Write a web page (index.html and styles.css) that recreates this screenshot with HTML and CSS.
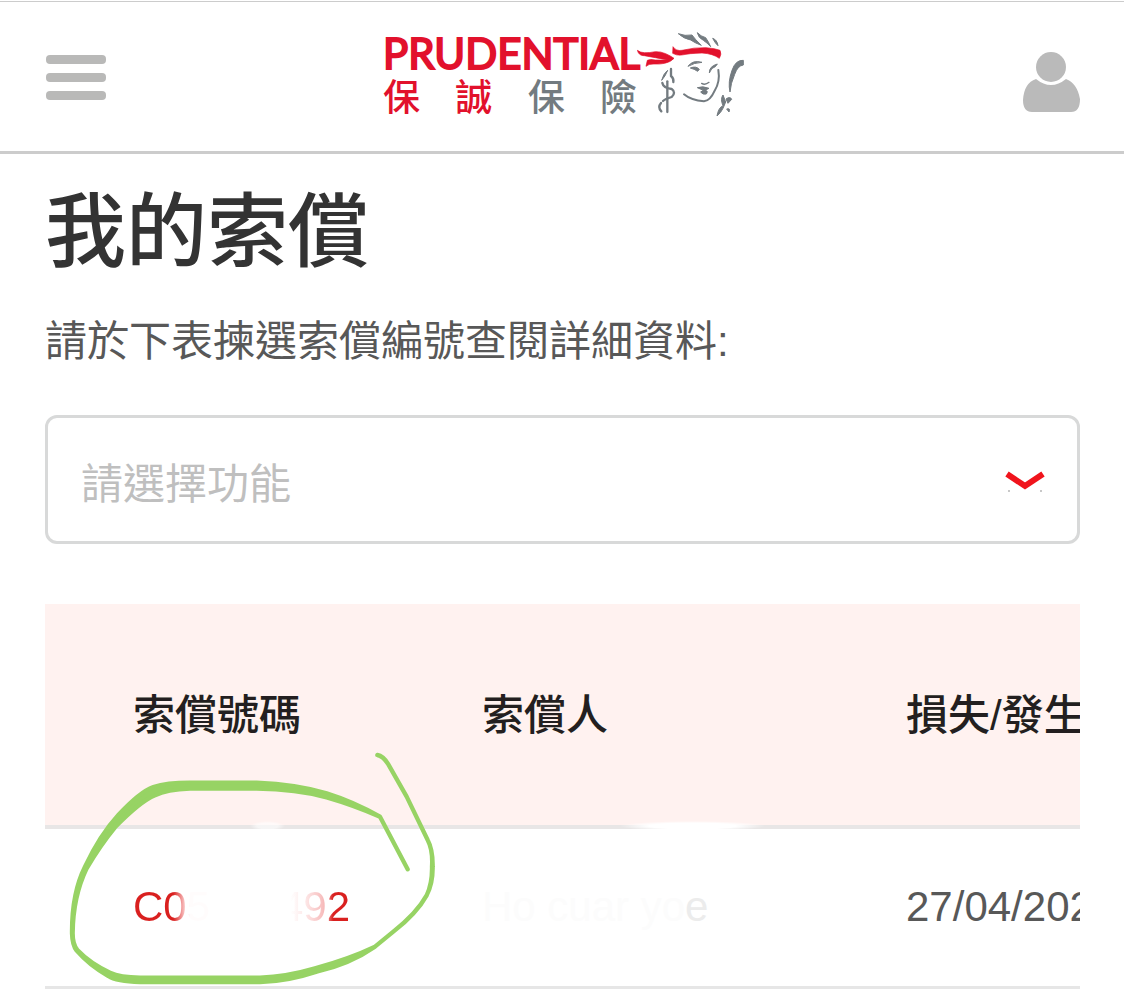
FILE: index.html
```
<!DOCTYPE html>
<html lang="zh-HK">
<head>
    <meta charset="UTF-8">
    <meta name="viewport" content="width=device-width, initial-scale=1.0">
    <title>我的索償</title>
    <link rel="stylesheet" href="styles.css">
</head>
<body>
    <header class="header">
        <button class="menu" aria-label="選單">
            <span></span>
            <span></span>
            <span></span>
        </button>
        <a class="logo" href="#">
            <span class="logo-text">
                <span class="en">PRUDENTIAL</span>
                <span class="zh"><b>保</b><b>誠</b><i>保</i><i>險</i></span>
            </span>
            <svg class="face" viewBox="230 30 330 267" aria-hidden="true">
                <!-- 頭帶 -->
                <g fill="#e2112c" stroke="#e2112c" stroke-width="2">
                    <path d="M231 91 Q236 108 252 107 Q268 110 285 113 Q305 117 322 119 Q299 121 285 120 Q270 116 261 121 L257 139 Q265 131 281 132 Q299 133 313 130 Q332 126 341 115 Q330 107 316 101 Q300 94 285 95 Q266 99 252 98 Q240 98 231 91Z"/>
                    <path d="M338 80 Q347 94 365 91 Q401 82 437 83 Q464 85 479 91 Q485 102 477 115 Q458 101 425 99 Q386 100 364 105 Q348 107 337 100Z"/>
                </g>
                <g fill="#737b80" stroke="#737b80" stroke-width="3">
                    <path d="M354 41 Q374 49 395 45 Q404 58 423 76 Q404 69 391 60 Q370 56 354 41Z"/>
                    <path d="M411 38 Q421 49 436 53 Q445 66 451 80 Q440 68 429 61 Q414 54 411 38Z"/>
                    <path d="M457 55 Q470 59 473 77 Q466 72 457 55Z"/>
                    <path d="M383 139 Q397 119 425 127 Q401 128 383 139Z"/>
                    <path d="M390 144 Q407 137 417 148 L412 154 Q402 147 390 144Z"/>
                    <path d="M447 159 Q446 139 471 132 L465 140 Q453 142 447 159Z"/>
                    <path d="M411 203 Q428 197 446 205 L434 211 Q445 212 438 222 Q427 225 421 216 L429 211Z"/>
                    <path d="M549 121 Q526 119 515 151 Q502 187 509 216 Q511 190 523 163 Q532 137 549 135Z"/>
                    <path d="M488 225 Q479 237 488 257 Q474 263 470 288 Q482 278 488 265 L496 246Z"/>
                    <path d="M497 237 Q510 228 514 238 L503 250Z M499 267 Q511 263 506 276Z"/>
                    <path d="M322 151 Q309 161 304 181 Q315 169 322 151Z"/>
                </g>
                <g fill="none" stroke="#737b80" stroke-width="7" stroke-linecap="round">
                    <path d="M332 147 V168 Q341 175 339 186"/>
                    <path d="M321 184 V276"/>
                    <path d="M306 189 Q309 204 334 207 Q348 217 334 231 Q314 237 308 243"/>
                    <path d="M302 249 Q291 262 303 274"/>
                    <path d="M474 150 Q480 185 463 212 Q450 242 431 244 Q392 241 371 223" stroke-width="6"/>
                    <path d="M424 190 Q434 197 446 187" stroke-width="4"/>
                </g>
            </svg>
        </a>
        <button class="user" aria-label="帳戶">
            <svg viewBox="0 0 57 60" aria-hidden="true">
                <circle cx="28" cy="15" r="15"/>
                <path d="M13 27 Q28 39 43 27 Q54 31 57 47 Q57 60 48 60 H9 Q0 60 0 48 Q1 31 13 27Z"/>
            </svg>
        </button>
    </header>

    <main class="content">
        <h1>我的索償</h1>
        <p>請於下表揀選索償編號查閱詳細資料:</p>

        <div class="select-box">
            <select aria-label="請選擇功能">
                <option>請選擇功能</option>
            </select>
            <svg class="arrow" viewBox="0 0 40 22" aria-hidden="true">
                <path d="M2 3 L20 15 L38 3"/>
                <circle cx="4" cy="20" r="0.700"/>
                <circle cx="36" cy="20" r="0.700"/>
            </svg>
        </div>

        <div class="claims">
            <table>
                <thead>
                    <tr>
                        <th class="no">索償號碼</th>
                        <th class="name">索償人</th>
                        <th>損失/發生</th>
                    </tr>
                </thead>
                <tbody>
                    <tr>
                        <td><a href="#"><span class="fade-end">C05</span><span class="fade-start">492</span></a></td>
                        <td class="hidden-name">Ho cuar yo<span>e</span></td>
                        <td>27/04/202</td>
                    </tr>
                </tbody>
            </table>
            <span class="smudge small"></span>
            <span class="smudge"></span>
            <!-- 手繪圈 -->
            <svg class="circle" viewBox="105 30 1125 708" aria-hidden="true">
                <path d="M1042 45 Q1060 48 1075 73 L1130 170 L1193 300 Q1209 330 1208 380 Q1209 430 1190 466 Q1160 520 1090 575 L1035 620 Q960 672 860 695 Q770 725 690 726 H330 Q260 725 235 708 Q180 678 140 632 Q127 615 126 580 Q125 460 165 380 Q210 285 265 225 Q330 155 370 141 Q410 128 480 128 H680 Q800 133 890 160 Q970 185 1050 230 L1133 388 L1050 230 Q970 195 890 172 Q800 148 680 146 H480 Q410 149 375 166 Q330 185 255 262 Q210 317 170 385 Q129 470 128 580 Q128 613 142 630 Q180 670 240 698 Q270 712 330 713 H690 Q770 710 855 685 Q960 656 1035 620 L1090 575 Q1160 520 1190 466 Q1207 430 1206 380 Q1209 330 1193 300 L1130 170 L1075 73 Q1060 50 1042 45Z"/>
            </svg>
        </div>
    </main>
</body>
</html>
```
FILE: styles.css
```
*{
    box-sizing: border-box;
}
body{
    margin: 0;
    padding-top: 1px;
    background-color: #fff;
    color: #585858;
    font-family: "Liberation Sans", "Noto Sans CJK TC", sans-serif;
    font-size: 42px;
}
button{
    padding: 0;
    border: none;
    background: none;
}
a{
    text-decoration: none;
}

/* 頂部 */
.header{
    display: flex;
    justify-content: space-between;
    align-items: center;
    height: 153px;
    padding: 0 44px 0 45px;
    border-top: 1px solid #ccc;
    border-bottom: 3px solid #ccc;
}
.menu{
    display: flex;
    flex-direction: column;
    gap: 9px;
    width: 62px;
    padding: 2px 1px 0;
}
.menu span{
    height: 9px;
    border-radius: 4px;
    background-color: #b9b9b8;
}
.logo{
    display: flex;
    align-items: center;
}
.logo-text{
    display: flex;
    flex-direction: column;
    gap: 2px;
    width: 254px;
    padding-bottom: 8px;
}
.logo .en{
    color: #e2112c;
    font-family: Lato, sans-serif;
    font-size: 42px;
    line-height: 42px;
    white-space: nowrap;
    -webkit-text-stroke: 2px #e2112c;
}
.logo .zh{
    display: flex;
    justify-content: space-between;
    font-family: "Noto Sans CJK TC", sans-serif;
    font-size: 37px;
    line-height: 38px;
}
.logo .zh b{
    color: #e2112c;
    font-weight: 500;
}
.logo .zh i{
    color: #737b80;
    font-style: normal;
    font-weight: 500;
}
.face{
    width: 110px;
    height: 89px;
    margin-bottom: 4px;
}
.user svg{
    display: block;
    width: 57px;
    height: 60px;
    margin-top: 10px;
    fill: #bababa;
}

/* 內容 */
.content{
    padding: 0 44px 0 45px;
}
h1{
    margin: 0;
    padding-top: 18px;
    color: #333;
    font-size: 81px;
    font-weight: 500;
    line-height: 120px;
}
p{
    margin: 20px 0 43px;
    line-height: 60px;
}
.select-box{
    position: relative;
}
select{
    width: 100%;
    height: 129px;
    padding: 10px 33px 0;
    border: 3px solid #d8d9d9;
    border-radius: 12px;
    background-color: #fff;
    color: #bfbfbf;
    font: inherit;
    appearance: none;
}
.arrow{
    position: absolute;
    right: 35px;
    top: 56px;
    width: 40px;
    height: 22px;
    fill: #666;
    pointer-events: none;
}
.arrow path{
    fill: none;
    stroke: #f0141c;
    stroke-width: 6;
}

/* 索償列表 */
.claims{
    position: relative;
    margin-top: 60px;
    overflow: hidden;
}
table{
    width: 1300px;
    border-collapse: separate;
    border-spacing: 0;
    table-layout: fixed;
}
th, td{
    padding: 0 0 0 88px;
    text-align: left;
    white-space: nowrap;
}
th{
    height: 225px;
    padding-bottom: 6px;
    border-bottom: 4px solid #e8e6e6;
    background-color: #fff2f0;
    color: #231f20;
    font-weight: 500;
}
th.no{
    width: 349px;
}
th.name{
    width: 424px;
}
td{
    height: 160px;
    padding-bottom: 2px;
    border-bottom: 3px solid #e6e6e6;
}
td a{
    display: flex;
    justify-content: space-between;
    width: 217px;
}
.fade-end, .fade-start{
    color: transparent;
    background-clip: text;
    -webkit-background-clip: text;
}
.fade-end{
    background-image: linear-gradient(90deg, #d9201f 52%, #f9c4c4 67%, #fffcfc 74%);
}
.fade-start{
    background-image: linear-gradient(90deg, #fff 15%, #fde8e8 36%, #f7bcbc 62%, #d9201f 76%);
}
.hidden-name{
    color: #fcfcfc;
}
.hidden-name span{
    color: #ececec;
}
.smudge{
    position: absolute;
    left: 575px;
    top: 217px;
    width: 145px;
    height: 10px;
    background: radial-gradient(closest-side, #fff 60%, transparent);
}
.smudge.small{
    left: 205px;
    width: 35px;
    opacity: 0.6;
}
.circle{
    position: absolute;
    left: 20px;
    top: 146px;
    width: 375px;
    height: 236px;
    fill: #97d364;
    stroke: #97d364;
    stroke-width: 13;
    stroke-linejoin: round;
    pointer-events: none;
}
```
